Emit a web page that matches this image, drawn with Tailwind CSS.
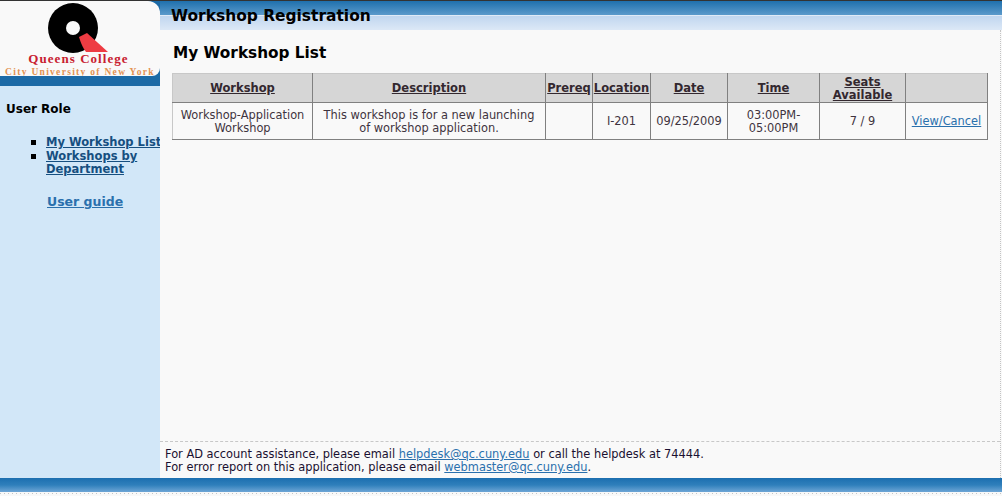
<!DOCTYPE html>
<html lang="en">
<head>
    <meta charset="UTF-8">
    <meta name="viewport" content="width=device-width, initial-scale=1.0">
    <title>Workshop Registration</title>
    <script src="https://cdn.jsdelivr.net/npm/@tailwindcss/browser@4"></script>
</head>
<body class="bg-[#f9f9f9] font-['DejaVu_Sans',Verdana,sans-serif] text-[11.4px] overflow-hidden">
    <div class="w-[1002px] h-[496px] flex flex-col overflow-hidden">
        <div class="h-px bg-[#333333]"></div>
        <div class="flex h-[477px]">
            <!-- sidebar -->
            <aside class="w-[160px] shrink-0 bg-[#d2e7f8] flex flex-col overflow-hidden">
                <div class="h-[85px] bg-[#1c6aa6]">
                    <div class="h-[75px] bg-[#f9f9f9] rounded-tr-[12px] rounded-br-[8px] relative overflow-hidden">
                        <svg class="absolute left-0 top-0" width="160" height="75" viewBox="0 0 160 75">
                            <circle cx="73" cy="27" r="25" fill="#000"/>
                            <circle cx="73" cy="27" r="7" fill="#f9f9f9"/>
                            <path d="M79 36 L87 32 L108 51 L86 51 Q82 46 79 36 Z" fill="#ee3c43"/>
                        </svg>
                        <div class="absolute left-0 top-[52px] w-[157px] text-center font-['Liberation_Serif',serif] font-bold text-[13px] leading-[12px] tracking-[1.05px] text-[#c8202f]">Queens College</div>
                        <div class="absolute left-0 top-[67px] w-[160px] text-center font-['Liberation_Serif',serif] font-bold text-[9.5px] leading-[8px] tracking-[1.3px] text-[#e39252]">City University of New York</div>
                    </div>
                </div>
                <h3 class="mt-[15px] ml-[6px] text-[12px] leading-[16px] font-bold text-black">User Role</h3>
                <ul class="mt-[19px] ml-[46px] text-[11.5px] leading-[13px] font-bold text-[#164f80] space-y-px">
                    <li class="relative whitespace-nowrap"><span class="absolute left-[-15px] top-[4px] w-[5px] h-[5px] bg-black"></span><a href="#" class="underline">My Workshop List</a></li>
                    <li class="relative"><span class="absolute left-[-15px] top-[4px] w-[5px] h-[5px] bg-black"></span><a href="#" class="underline">Workshops by<br>Department</a></li>
                </ul>
                <a href="#" class="mt-[18px] ml-[47px] text-[12.5px] leading-[15px] font-bold text-[#2a70ad] underline">User guide</a>
            </aside>
            <!-- main -->
            <main class="flex-1 flex flex-col min-w-0">
                <div class="h-[29px] bg-[linear-gradient(#1f70ad_0,#5b9acb_14px,#ffffff_14px,#c0d6ef_15px,#dce8f6_29px)] pl-[11px] text-[15.45px] leading-[31px] font-bold text-black">Workshop Registration</div>
                <div class="flex-1 flex flex-col min-h-0 mr-px border-r border-dotted border-[#c4c4c4]">
                    <h2 class="mt-[13px] ml-[13px] text-[15.3px] leading-[20px] font-bold text-black">My Workshop List</h2>
                    <div class="mt-[10px] ml-[12px] flex-1">
                        <table class="w-[816px] table-fixed border-collapse text-center text-[#3f3440]">
                            <colgroup>
                                <col class="w-[140px]"><col class="w-[233px]"><col class="w-[47px]"><col class="w-[58px]"><col class="w-[77px]"><col class="w-[92px]"><col class="w-[86px]"><col>
                            </colgroup>
                            <thead>
                                <tr class="h-[29px] bg-[#d6d6d6] text-[#33282f] font-bold text-[11.5px] leading-[13px] underline">
                                    <th class="border border-[#808080] border-t-[#c8c8c8] border-l-[#c8c8c8]">Workshop</th>
                                    <th class="border border-[#808080] border-t-[#c8c8c8]">Description</th>
                                    <th class="border border-[#808080] border-t-[#c8c8c8] whitespace-nowrap">Prereq</th>
                                    <th class="border border-[#808080] border-t-[#c8c8c8] whitespace-nowrap">Location</th>
                                    <th class="border border-[#808080] border-t-[#c8c8c8]">Date</th>
                                    <th class="border border-[#808080] border-t-[#c8c8c8]">Time</th>
                                    <th class="border border-[#808080] border-t-[#c8c8c8] pt-px">Seats Available</th>
                                    <th class="border border-[#808080] border-t-[#c8c8c8]"></th>
                                </tr>
                            </thead>
                            <tbody>
                                <tr class="h-[37px] leading-[13px]">
                                    <td class="border border-[#808080] border-l-[#c8c8c8] pt-px">Workshop-Application Workshop</td>
                                    <td class="border border-[#808080] px-2 pt-px">This workshop is for a new launching of workshop application.</td>
                                    <td class="border border-[#808080]"></td>
                                    <td class="border border-[#808080] pt-px">I-201</td>
                                    <td class="border border-[#808080] pt-px">09/25/2009</td>
                                    <td class="border border-[#808080] px-4 pt-px">03:00PM-05:00PM</td>
                                    <td class="border border-[#808080] pt-px">7 / 9</td>
                                    <td class="border border-[#808080] pt-px"><a href="#" class="underline text-[#2a70ad]">View/Cancel</a></td>
                                </tr>
                            </tbody>
                        </table>
                    </div>
                    <footer class="h-[37px] border-t border-dashed border-[#c8c8c8] pt-[6px] pl-[5px] leading-[13px] text-[#1a1030]">
                        <p>For AD account assistance, please email <a href="#" class="underline text-[#2a70ad]">helpdesk@qc.cuny.edu</a> or call the helpdesk at 74444.</p>
                        <p>For error report on this application, please email <a href="#" class="underline text-[#2a70ad]">webmaster@qc.cuny.edu</a>.</p>
                    </footer>
                </div>
            </main>
        </div>
        <div class="h-[14px] bg-[linear-gradient(#1c6fb0_0,#2f7fbb_7px,#6ea6d6_14px)]"></div>
        <div class="mt-[1px] h-px bg-[repeating-linear-gradient(90deg,#c4c4c4_0,#c4c4c4_1px,transparent_1px,transparent_4px)]"></div>
    </div>
</body>
</html>
